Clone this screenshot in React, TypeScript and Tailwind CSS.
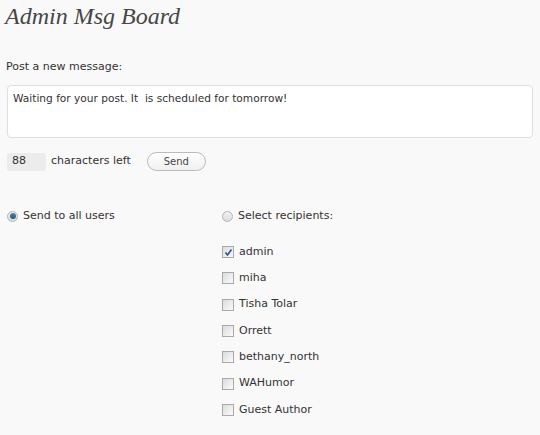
import { useState } from 'react';

const users = ['admin', 'miha', 'Tisha Tolar', 'Orrett', 'bethany_north', 'WAHumor', 'Guest Author'];

function Radio({ checked }: { checked: boolean }) {
  return (
    <span className="flex h-[11px] w-[11px] items-center justify-center rounded-full border border-[#b5b5b5] bg-gradient-to-b from-[#f2f2f2] to-[#dcdcdc]">
      {checked && <span className="h-[6px] w-[6px] rounded-full bg-gradient-to-b from-[#4b8ab8] to-[#1e5585]" />}
    </span>
  );
}

function Checkbox({ checked }: { checked: boolean }) {
  return (
    <span className="flex h-[12px] w-[12px] items-center justify-center border border-[#a9a9a9] bg-gradient-to-br from-[#dcdcdc] to-[#fbfbfb]">
      {checked && (
        <svg width="9" height="9" viewBox="0 0 9 9">
          <path d="M1.5 4.5 L3.5 7 L7.5 1.5" fill="none" stroke="#2b4fa8" strokeWidth="1.6" />
        </svg>
      )}
    </span>
  );
}

export default function App() {
  const [msg] = useState('Waiting for your post. It  is scheduled for tomorrow!');
  const [all] = useState(true);
  const [picked] = useState<string[]>(['admin']);

  return (
    <div className="min-h-[435px] bg-[#f9f9f9] font-['DejaVu_Sans',Verdana,sans-serif] text-[11px] text-[#333]">
      <h2 className="pl-[5px] font-['Liberation_Serif',Georgia,serif] text-[24px] italic leading-[32px] text-[#464646]">
        Admin Msg Board
      </h2>

      <p className="mt-[27px] pl-[6px] leading-[16px]">Post a new message:</p>

      <div className="mt-[10px] px-[7px]">
        <div className="h-[53px] w-[526px] whitespace-pre rounded-[4px] border border-[#dfdfdf] bg-white px-[5px] py-[4px] text-[10.6px] leading-[16px]">
          {msg}
        </div>
      </div>

      <div className="mt-[14px] flex items-center pl-[7px]">
        <span className="flex h-[18px] w-[39px] items-center rounded-[2px] bg-[#ececec] pl-[5px]">88</span>
        <span className="ml-[5px]">characters left</span>
        <button className="ml-[16px] h-[19px] w-[59px] rounded-full border border-[#bbb] bg-gradient-to-b from-white to-[#f0f0f0] text-[10px] text-[#464646]">
          Send
        </button>
      </div>

      <div className="mt-[37px] grid grid-cols-[215px_1fr] pl-[7px]">
        <label className="flex h-[16px] items-center gap-[5px]">
          <Radio checked={all} />
          <span>Send to all users</span>
        </label>
        <div>
          <label className="flex h-[16px] items-center gap-[5px]">
            <Radio checked={!all} />
            <span>Select recipients:</span>
          </label>
          <ul className="mt-[15px]">
            {users.map((u) => (
              <li key={u} className="flex h-[26.3px] items-center gap-[5px]">
                <Checkbox checked={picked.includes(u)} />
                <span>{u}</span>
              </li>
            ))}
          </ul>
        </div>
      </div>
    </div>
  );
}
